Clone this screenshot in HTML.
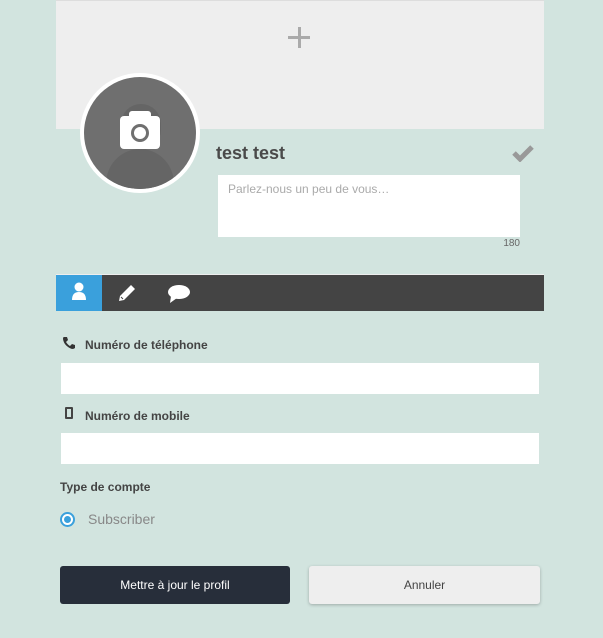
<!DOCTYPE html>
<html><head><meta charset="utf-8"><style>
*{margin:0;padding:0;box-sizing:border-box}
body{width:603px;height:638px;background:#d2e4df;font-family:"Liberation Sans",sans-serif;position:relative;overflow:hidden}
.a{position:absolute}
.lbl{font-size:12px;font-weight:bold;color:#444}
.inp{background:#fff;height:31px;left:61px;width:478px}
</style></head><body>
<div class="a" style="left:56px;top:0;width:488px;height:129px;background:#eee;border-top:1px solid #ddd"></div>
<div class="a" style="left:288px;top:36px;width:22px;height:3px;background:#aaa"></div>
<div class="a" style="left:297.5px;top:27px;width:3px;height:21px;background:#aaa"></div>
<div class="a" style="left:80px;top:73px;width:120px;height:120px;border-radius:50%;background:#fff"></div>
<div class="a" style="left:84px;top:77px;width:112px;height:112px;border-radius:50%;background:#6f6f6f;overflow:hidden">
 <div class="a" style="left:37px;top:27px;width:40px;height:46px;border-radius:20px;background:#656565"></div>
 <div class="a" style="left:22px;top:72px;width:68px;height:70px;border-radius:50%;background:#656565"></div>
</div>
<svg class="a" style="left:119px;top:110px" width="42" height="40" viewBox="0 0 42 40">
<rect x="1" y="6" width="40" height="33" rx="4" fill="#fff"/><rect x="10" y="1" width="22" height="8" rx="3" fill="#fff"/>
<circle cx="21" cy="23" r="9" fill="#6f6f6f"/><circle cx="21" cy="23" r="6" fill="#fff"/></svg>
<div class="a" style="left:216px;top:143px;font-size:18px;font-weight:bold;color:#4a4a4a">test test</div>
<svg class="a" style="left:512px;top:145px" width="22" height="17" viewBox="0 0 22 17"><path d="M2 8 L8 14 L20 2" stroke="#999" stroke-width="5" fill="none"/></svg>
<div class="a" style="left:218px;top:175px;width:302px;height:62px;background:#fff;font-size:12px;color:#aaa;padding:7px 10px">Parlez-nous un peu de vous…</div>
<div class="a" style="left:490px;top:238px;width:30px;text-align:right;font-size:10px;color:#666">180</div>
<div class="a" style="left:56px;top:274px;width:488px;height:37px;background:#444;border-top:1px solid #eee"></div>
<div class="a" style="left:56px;top:275px;width:46px;height:36px;background:#3aa0dc"></div>
<svg class="a" style="left:71px;top:282px" width="16" height="19" viewBox="0 0 16 19"><circle cx="8" cy="5" r="4.5" fill="#fff"/><path d="M1 18 Q1 10 8 10 Q15 10 15 18 Z" fill="#fff"/></svg>
<svg class="a" style="left:117px;top:283px" width="20" height="20" viewBox="0 0 20 20"><path d="M14 2 L18 6 L7 17 L2 18 L3 13 Z" fill="#fff"/><path d="M4 14 L6 16" stroke="#444" stroke-width="1"/></svg>
<svg class="a" style="left:167px;top:284px" width="24" height="20" viewBox="0 0 24 20"><ellipse cx="12" cy="8" rx="11" ry="7" fill="#fff"/><path d="M4 12 L3 19 L10 14 Z" fill="#fff"/></svg>
<svg class="a" style="left:62px;top:336px" width="14" height="14" viewBox="0 0 14 14"><path d="M2 1 L5 1 L6 4 L4 6 Q6 9 8 10 L10 8 L13 9 L13 12 Q12 13 10 13 Q2 10 1 3 Q1 1 2 1Z" fill="#333"/></svg>
<div class="a lbl" style="left:85px;top:338px">Numéro de téléphone</div>
<div class="a inp" style="top:363px"></div>
<div class="a" style="left:65px;top:407px;width:8px;height:12px;border:2px solid #444;border-radius:1px"></div>
<div class="a lbl" style="left:85px;top:409px">Numéro de mobile</div>
<div class="a inp" style="top:433px"></div>
<div class="a lbl" style="left:60px;top:480px">Type de compte</div>
<div class="a" style="left:60px;top:512px;width:15px;height:15px;border-radius:50%;border:2px solid #3aa0dc;background:#fff"></div>
<div class="a" style="left:64px;top:516px;width:7px;height:7px;border-radius:50%;background:#3aa0dc"></div>
<div class="a" style="left:88px;top:511px;font-size:14px;color:#888">Subscriber</div>
<div class="a" style="left:60px;top:566px;width:230px;height:38px;background:#272e3a;border-radius:3px;color:#fff;font-size:12px;text-align:center;line-height:38px">Mettre à jour le profil</div>
<div class="a" style="left:309px;top:566px;width:231px;height:38px;background:#eee;border-radius:3px;color:#444;font-size:12px;text-align:center;line-height:38px;box-shadow:0 1px 3px rgba(0,0,0,.25)">Annuler</div>
</body></html>
